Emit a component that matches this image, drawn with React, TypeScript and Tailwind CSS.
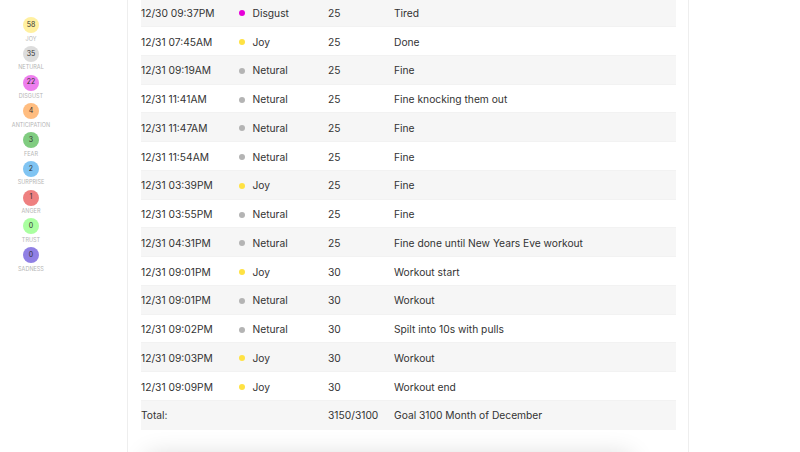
const moods = [
  { label: 'JOY', count: 58, color: 'bg-[#fff0a0]' },
  { label: 'NETURAL', count: 35, color: 'bg-[#dcdcdc]' },
  { label: 'DISGUST', count: 22, color: 'bg-[#ee7eee]' },
  { label: 'ANTICIPATION', count: 4, color: 'bg-[#ffbd80]' },
  { label: 'FEAR', count: 3, color: 'bg-[#80cc80]' },
  { label: 'SURPRISE', count: 2, color: 'bg-[#80c4f2]' },
  { label: 'ANGER', count: 1, color: 'bg-[#ee8080]' },
  { label: 'TRUST', count: 0, color: 'bg-[#aaffa0]' },
  { label: 'SADNESS', count: 0, color: 'bg-[#9080e4]' },
];

const dots: Record<string, string> = {
  Disgust: 'bg-[#e600d8]',
  Joy: 'bg-[#ffe243]',
  Netural: 'bg-[#b4b4b4]',
};

const rows = [
  ['12/30 09:37PM', 'Disgust', '25', 'Tired'],
  ['12/31 07:45AM', 'Joy', '25', 'Done'],
  ['12/31 09:19AM', 'Netural', '25', 'Fine'],
  ['12/31 11:41AM', 'Netural', '25', 'Fine knocking them out'],
  ['12/31 11:47AM', 'Netural', '25', 'Fine'],
  ['12/31 11:54AM', 'Netural', '25', 'Fine'],
  ['12/31 03:39PM', 'Joy', '25', 'Fine'],
  ['12/31 03:55PM', 'Netural', '25', 'Fine'],
  ['12/31 04:31PM', 'Netural', '25', 'Fine done until New Years Eve workout'],
  ['12/31 09:01PM', 'Joy', '30', 'Workout start'],
  ['12/31 09:01PM', 'Netural', '30', 'Workout'],
  ['12/31 09:02PM', 'Netural', '30', 'Spilt into 10s with pulls'],
  ['12/31 09:03PM', 'Joy', '30', 'Workout'],
  ['12/31 09:09PM', 'Joy', '30', 'Workout end'],
];

export default function App() {
  return (
    <div className="flex h-[452px] w-[800px] overflow-hidden bg-white font-['Inter',sans-serif] text-[#333]">
      <aside className="flex w-[62px] shrink-0 flex-col items-center pt-[17px]">
        {moods.map((m) => (
          <div key={m.label} className="flex h-[28.75px] flex-col items-center">
            <div className={`flex h-4 w-4 shrink-0 items-center justify-center rounded-full text-[7px] ${m.color}`}>{m.count}</div>
            <div className="mt-[2.5px] whitespace-nowrap text-[5.5px] leading-[7px] text-[#b5b5b5]">{m.label}</div>
          </div>
        ))}
      </aside>

      <main className="ml-[65px] h-[490px] w-[562px] shrink-0 border-x border-[#eeeeee] pl-[13px] pr-3">
        <div className="-mt-[1.6px] text-[10.25px]">
          {rows.map((r, i) => (
            <div key={i} className={`flex h-[28.75px] items-center border-b border-[#f2f2f2] pt-[2.4px] ${i % 2 === 0 ? 'bg-[#f6f6f6]' : 'bg-white'}`}>
              <div className="w-[98px] shrink-0">{r[0]}</div>
              <div className="flex w-[89px] shrink-0 items-center">
                <span className={`ml-[-0.5px] mr-[8px] h-[6px] w-[6px] rounded-full ${dots[r[1]]}`} />
                {r[1]}
              </div>
              <div className="w-[66px] shrink-0">{r[2]}</div>
              <div>{r[3]}</div>
            </div>
          ))}
          <div className="flex h-[28.75px] items-center bg-[#f6f6f6] pt-[1.6px]">
            <div className="w-[187px] shrink-0">Total:</div>
            <div className="w-[66px] shrink-0">3150/3100</div>
            <div>Goal 3100 Month of December</div>
          </div>
        </div>
        <div className="ml-[6px] mt-[26px] h-10 w-[484px] rounded-sm shadow-[0_0_26px_rgba(0,0,0,0.16)]" />
      </main>
    </div>
  );
}
